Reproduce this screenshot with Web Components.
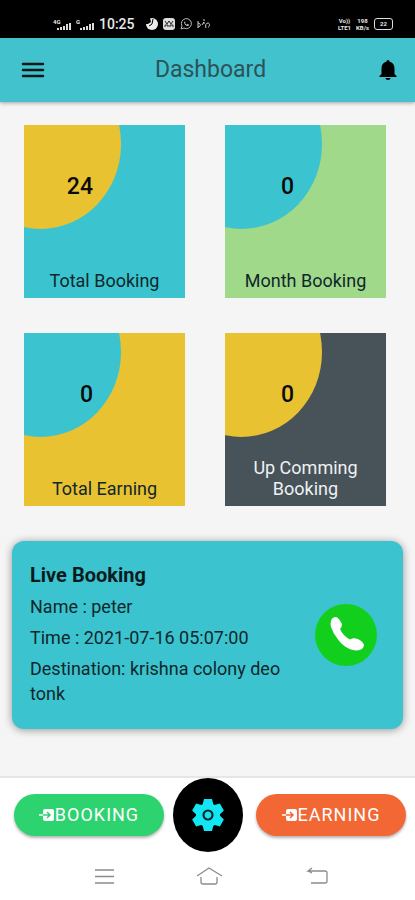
<!DOCTYPE html>
<html lang="en">
<head>
<meta charset="utf-8">
<meta name="viewport" content="width=device-width, initial-scale=1">
<title>Dashboard</title>
<style>
  body {
    margin: 0;
    font-family: Roboto, "Liberation Sans", sans-serif;
    background-color: #f5f5f5;
    color: #10272b;
  }
</style>
</head>
<body>
<driver-dashboard></driver-dashboard>

<script>
/**
 * Attach an open shadow root with the given markup.
 */
const render = (element, html) => {
  const template = document.createElement('template')
  template.innerHTML = html
  element.attachShadow({ mode: 'open' })
    .appendChild(template.content.cloneNode(true))
}

/**
 * Represents the phone's status bar.
 */
customElements.define('status-bar',
  class extends HTMLElement {
    constructor () {
      super()
      render(this, `
        <style>
          :host {
            display: flex;
            align-items: center;
            gap: 5px;
            box-sizing: border-box;
            height: 38px;
            padding: 10px 22px 0 53px;
            background-color: #000;
            color: #e8e8e8;
          }
          svg { display: block; flex: none; }
          .clock { font-size: 14px; font-weight: 500; line-height: 16px; margin-right: 6px; }
          .space { flex: 1; }
          .tiny { font-size: 6px; font-weight: 700; line-height: 6px; text-align: center; }
          .stack { display: flex; flex-direction: column; }
          .stack .tiny { line-height: 7px; }
          .signal { display: flex; flex-direction: column; }
          .signal svg { margin-top: -2px; }
          .signal .tiny { text-align: left; }
          .battery {
            box-sizing: border-box;
            width: 19px;
            height: 12px;
            border: 1px solid #ddd;
            border-radius: 3px;
            line-height: 10px;
          }
        </style>
        <div class="signal">
          <span class="tiny">4G</span>
          <svg width="18" height="7" viewBox="0 0 18 7" fill="#ddd"><path d="M4 5h2v2H4zM7 4h2v3H7zM10 3h2v4h-2zM13 1h2v6h-2zM16 0h2v7h-2z"/></svg>
        </div>
        <div class="signal">
          <span class="tiny">G</span>
          <svg width="18" height="7" viewBox="0 0 18 7" fill="#ddd"><path d="M4 5h2v2H4zM7 4h2v3H7zM10 3h2v4h-2zM13 1h2v6h-2zM16 0h2v7h-2z"/></svg>
        </div>
        <span class="clock">10:25</span>
        <svg width="12" height="12" viewBox="0 0 12 12"><circle cx="6" cy="6" r="6" fill="#eee"/><path d="M0 0h4l1 4-3 2H0z" fill="#000"/><path d="M7 1L6 6 3 8" fill="none" stroke="#000"/></svg>
        <svg width="12" height="12" viewBox="0 0 12 12"><rect width="12" height="12" rx="3" fill="#ddd"/><path d="M2 3l2 3 2-3 2 3 2-3M2 9V7h3v2M7 9V7h3v2" fill="none" stroke="#222"/></svg>
        <svg width="12" height="12" viewBox="0 0 12 12" fill="none" stroke="#bbb"><path d="M1 11l1-3a5 5 0 1 1 2 2z"/><path d="M4 3.500c0 3 2 5 4.500 4.500l.5-1.500-1.500-.5-1 .8L5 5l.6-1z" fill="#bbb" stroke="none"/></svg>
        <svg width="13" height="10" viewBox="0 0 13 10" fill="none" stroke="#ccc"><path d="M1 2v7M1 4c3 0 3 4 0 4M5 6l2-3v2M7 0v2M9 9c-1-3 0-5 2-5s2 4 0 4"/></svg>
        <span class="space"></span>
        <div class="stack"><span class="tiny">Vo))</span><span class="tiny">LTE1</span></div>
        <div class="stack"><span class="tiny">198</span><span class="tiny">KB/s</span></div>
        <span class="tiny battery">22</span>
      `)
    }
  }
)

/**
 * Represents the title bar with the menu and notification buttons.
 */
customElements.define('app-header',
  class extends HTMLElement {
    constructor () {
      super()
      render(this, `
        <style>
          :host {
            display: block;
            position: relative;
            background-color: #42c2cd;
            box-shadow: 0 1px 4px rgba(0, 0, 0, .35);
          }
          header {
            display: grid;
            grid-template-columns: 24px 1fr 24px;
            align-items: center;
            height: 64px;
            padding: 0 15px 0 21px;
          }
          h1 {
            margin: 0;
            font-size: 23px;
            font-weight: 400;
            line-height: 28px;
            text-align: center;
            color: #2d5258;
          }
          button { padding: 0; border: 0; background: none; }
          svg { display: block; }
        </style>
        <header>
          <button type="button" aria-label="Menu">
            <svg width="24" height="24" viewBox="0 0 24 24" stroke="#06181a" stroke-width="2.500" stroke-linecap="round"><path d="M2 6h20M2 12h20M2 18h20"/></svg>
          </button>
          <h1><slot></slot></h1>
          <button type="button" aria-label="Notifications">
            <svg width="24" height="24" viewBox="0 0 24 24"><path d="M12 22c1.400 0 2.500-.8 2.500-2h-5c0 1.200 1.100 2 2.500 2zM18.500 16v-5.500c0-3.500-1.800-6-4.900-6.700V3.500a1.600 1.600 0 0 0-3.200 0v.3C7.300 4.500 5.500 7 5.500 10.500V16l-2 2v1h17v-1z"/></svg>
          </button>
        </header>
      `)
    }
  }
)

/**
 * Represents a tile with a count in its round corner and a label below.
 */
customElements.define('stat-tile',
  class extends HTMLElement {
    constructor () {
      super()
      render(this, `
        <style>
          :host {
            display: flex;
            flex-direction: column;
            justify-content: space-between;
            position: relative;
            overflow: hidden;
            box-sizing: border-box;
            aspect-ratio: 161 / 173;
            padding: 49px 16px 7px;
            background-color: var(--tile, #3bc4cf);
          }
          .corner {
            position: absolute;
            top: -38%;
            left: -40%;
            width: 100%;
            height: 98%;
            border-radius: 50%;
            background-color: var(--corner, #e9c232);
          }
          .count {
            position: relative;
            width: 53px;
            font-size: 23px;
            font-weight: 500;
            line-height: 26px;
            text-align: right;
            color: #0b0b0b;
          }
          .label {
            font-size: 18px;
            line-height: 21px;
            text-align: center;
          }
        </style>
        <div class="corner"></div>
        <div class="count"><slot name="count"></slot></div>
        <div class="label"><slot></slot></div>
      `)
    }
  }
)

/**
 * Represents the card of the booking in progress.
 */
customElements.define('live-booking',
  class extends HTMLElement {
    constructor () {
      super()
      render(this, `
        <style>
          :host {
            display: flex;
            align-items: center;
            gap: 18px;
            margin: 35px 12px 0;
            padding: 0 26px 0 18px;
            border-radius: 12px;
            background-color: #3bc4cf;
            box-shadow: 0 1px 8px rgba(0, 0, 0, .4);
          }
          .details {
            display: flex;
            flex-direction: column;
            flex: 1;
            gap: 6px;
            padding: 22px 0 23px;
            font-size: 18px;
            line-height: 25px;
          }
          h2 { margin: 0; font-size: 20px; font-weight: 700; line-height: 25px; color: #0a1b1e; }
          button {
            flex: none;
            width: 62px;
            height: 62px;
            padding: 0;
            border: 0;
            border-radius: 50%;
            background-color: #13cf1d;
          }
          svg { display: block; }
        </style>
        <div class="details">
          <h2><slot name="title"></slot></h2>
          <slot></slot>
        </div>
        <button type="button" aria-label="Call">
          <svg width="62" height="62" viewBox="0 0 62 62" fill="#fff"><path d="M16 17q1-4 5-4q3 1 6 7q0 3-2 5q3 7 10 10.500q3-2 6-1q5 1 8 6q0 4-4 5.500q-4 1-9-.5q-8-3-13-10q-5-6-7-12.500q-1-3 0-6z"/></svg>
        </button>
      `)
    }
  }
)

customElements.define('pill-button',
  class extends HTMLElement {
    constructor () {
      super()
      render(this, `
        <style>
          :host { display: block; }
          button {
            display: flex;
            align-items: center;
            justify-content: center;
            width: 100%;
            height: 42px;
            padding: 0;
            border: 0;
            border-radius: 21px;
            background-color: var(--pill, #2dd36f);
            box-shadow: 0 2px 3px rgba(0, 0, 0, .3);
            font: 400 18px/22px Roboto, "Liberation Sans", sans-serif;
            letter-spacing: 1px;
            color: #fff;
          }
        </style>
        <button type="button">
          <svg width="16" height="16" viewBox="0 0 16 16"><rect x="4" y="2" width="11" height="12" rx="2" fill="#fff"/><path d="M0 8h4" stroke="#fff" stroke-width="1.500"/><path d="M4 8h7M8 5l3 3-3 3" fill="none" stroke="var(--pill, #2dd36f)" stroke-width="1.500"/></svg>
          <slot></slot>
        </button>
      `)
    }
  }
)

/**
 * Represents the bottom bar and the phone's navigation keys.
 */
customElements.define('bottom-bar',
  class extends HTMLElement {
    constructor () {
      super()
      render(this, `
        <style>
          :host {
            display: block;
            background-color: #fff;
            border-top: 2px solid #e6e6e6;
          }
          .actions {
            display: grid;
            grid-template-columns: 1fr 74px 1fr;
            gap: 9px;
            align-items: center;
            padding: 0 9px 0 14px;
          }
          .orange { --pill: #f36735; }
          button { padding: 0; border: 0; background: none; }
          .settings {
            display: grid;
            place-items: center;
            width: 70px;
            height: 74px;
            border-radius: 50%;
            background-color: #000;
          }
          nav {
            display: flex;
            justify-content: space-between;
            align-items: center;
            height: 48px;
            padding: 0 85px 0 92px;
          }
          svg { display: block; }
        </style>
        <div class="actions">
          <pill-button>BOOKING</pill-button>
          <button class="settings" type="button" aria-label="Settings">
            <svg width="34" height="34" viewBox="-17 -17 34 34">
              <g fill="#12e6f5">
                <circle r="12"/>
                <path d="M-4-16h8l1.500 6h-11zM-4 16h8l1.500-6h-11z"/>
                <path d="M-4-16h8l1.500 6h-11zM-4 16h8l1.500-6h-11z" transform="rotate(60)"/>
                <path d="M-4-16h8l1.500 6h-11zM-4 16h8l1.500-6h-11z" transform="rotate(120)"/>
              </g>
              <circle r="4.500" fill="none" stroke="#06282c" stroke-width="2.200"/>
            </svg>
          </button>
          <pill-button class="orange">EARNING</pill-button>
        </div>
        <nav>
          <button type="button" aria-label="Recent apps">
            <svg width="24" height="20" viewBox="0 0 24 20" stroke="#8c8c8c" stroke-width="1.300"><path d="M3 4h19M3 10.500h19M3 17h19"/></svg>
          </button>
          <button type="button" aria-label="Home">
            <svg width="28" height="20" viewBox="0 0 28 20" fill="none" stroke="#8c8c8c" stroke-width="1.300"><path d="M0 10L12 2l13 8M4 11v5q0 2 2 2h12q2 0 2-2v-5"/></svg>
          </button>
          <button type="button" aria-label="Back">
            <svg width="24" height="20" viewBox="0 0 24 20" fill="none" stroke="#8c8c8c" stroke-width="1.300"><path d="M6 2L2 5h17q2 0 2 2v8q0 2-2 2H5M2 5l4 2"/></svg>
          </button>
        </nav>
      `)
    }
  }
)

/**
 * Represents the whole dashboard page.
 */
customElements.define('driver-dashboard',
  class extends HTMLElement {
    constructor () {
      super()
      render(this, `
        <style>
          :host {
            display: flex;
            flex-direction: column;
            min-height: 100vh;
          }
          main { flex: 1; padding: 23px 0 35px; }
          .tiles {
            display: grid;
            grid-template-columns: 1fr 1fr;
            gap: 35px 40px;
            padding: 0 29px 0 24px;
          }
          .green { --tile: #a0d98a; --corner: #3bc4cf; }
          .yellow { --tile: #e9c232; --corner: #3bc4cf; }
          .dark { --tile: #475359; color: #eef1f2; }
        </style>
        <status-bar></status-bar>
        <app-header>Dashboard</app-header>
        <main>
          <section class="tiles">
            <stat-tile><span slot="count">24</span>Total Booking</stat-tile>
            <stat-tile class="green"><span slot="count">0</span>Month Booking</stat-tile>
            <stat-tile class="yellow"><span slot="count">0</span>Total Earning</stat-tile>
            <stat-tile class="dark"><span slot="count">0</span>Up Comming Booking</stat-tile>
          </section>
          <live-booking>
            <span slot="title">Live Booking</span>
            <div>Name : peter</div>
            <div>Time : 2021-07-16 05:07:00</div>
            <div>Destination: krishna colony deo tonk</div>
          </live-booking>
        </main>
        <bottom-bar></bottom-bar>
      `)
    }
  }
)
</script>
</body>
</html>
